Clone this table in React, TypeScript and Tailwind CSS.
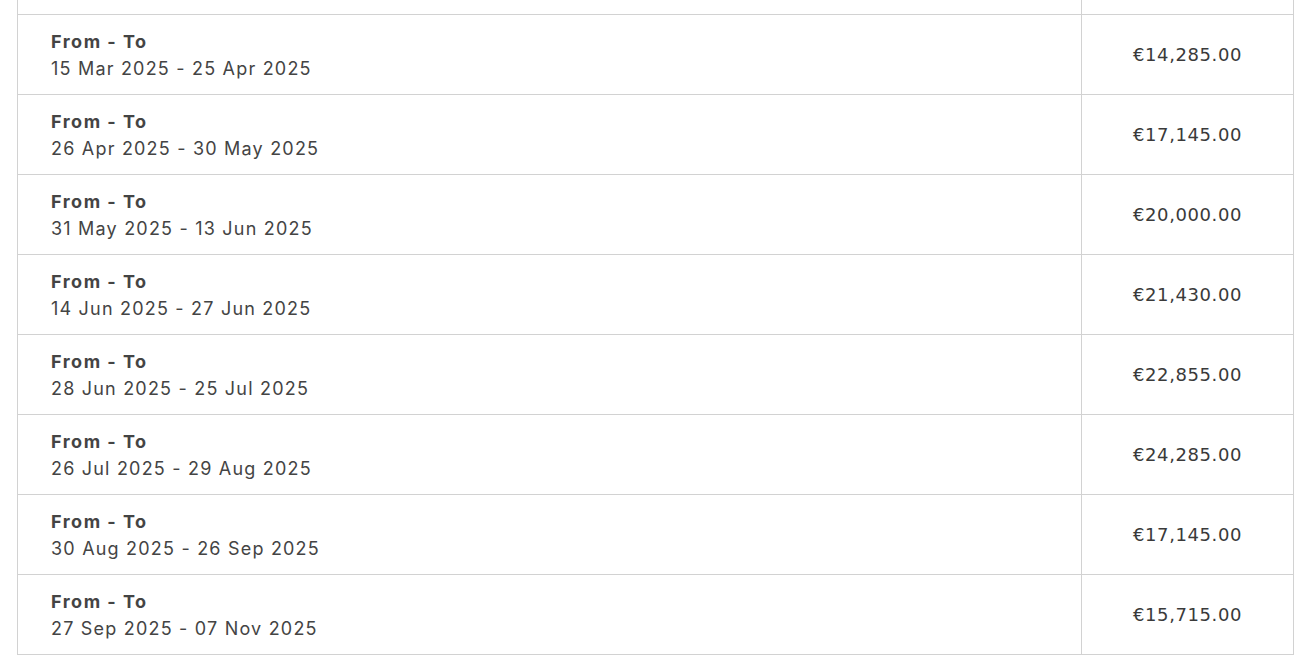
const ROWS = [
  { range: "01 Mar 2025 - 14 Mar 2025", price: "€12,855.00" },
  { range: "15 Mar 2025 - 25 Apr 2025", price: "€14,285.00" },
  { range: "26 Apr 2025 - 30 May 2025", price: "€17,145.00" },
  { range: "31 May 2025 - 13 Jun 2025", price: "€20,000.00" },
  { range: "14 Jun 2025 - 27 Jun 2025", price: "€21,430.00" },
  { range: "28 Jun 2025 - 25 Jul 2025", price: "€22,855.00" },
  { range: "26 Jul 2025 - 29 Aug 2025", price: "€24,285.00" },
  { range: "30 Aug 2025 - 26 Sep 2025", price: "€17,145.00" },
  { range: "27 Sep 2025 - 07 Nov 2025", price: "€15,715.00" },
];

export default function App() {
  return (
    <div className="h-[668px] overflow-hidden bg-white px-[17px]">
      <table className="-mt-[66px] w-[1277px] border-collapse">
        <tbody>
          {ROWS.map((row, i) => (
            <tr key={i} className="h-[80px]">
              <td className="border border-[#d2d2d2] pl-[33px] align-middle font-['Inter',sans-serif] text-[18px] leading-[27px] text-[#444]">
                <div className="font-bold tracking-[1.5px]">From - To</div>
                <div className="tracking-[1.2px]">{row.range}</div>
              </td>
              <td className="w-[212px] border border-[#d2d2d2] text-center align-middle font-['DejaVu_Sans',sans-serif] text-[18px] tracking-[0.6px] text-[#3a3a3a]">
                {row.price}
              </td>
            </tr>
          ))}
        </tbody>
      </table>
    </div>
  );
}
